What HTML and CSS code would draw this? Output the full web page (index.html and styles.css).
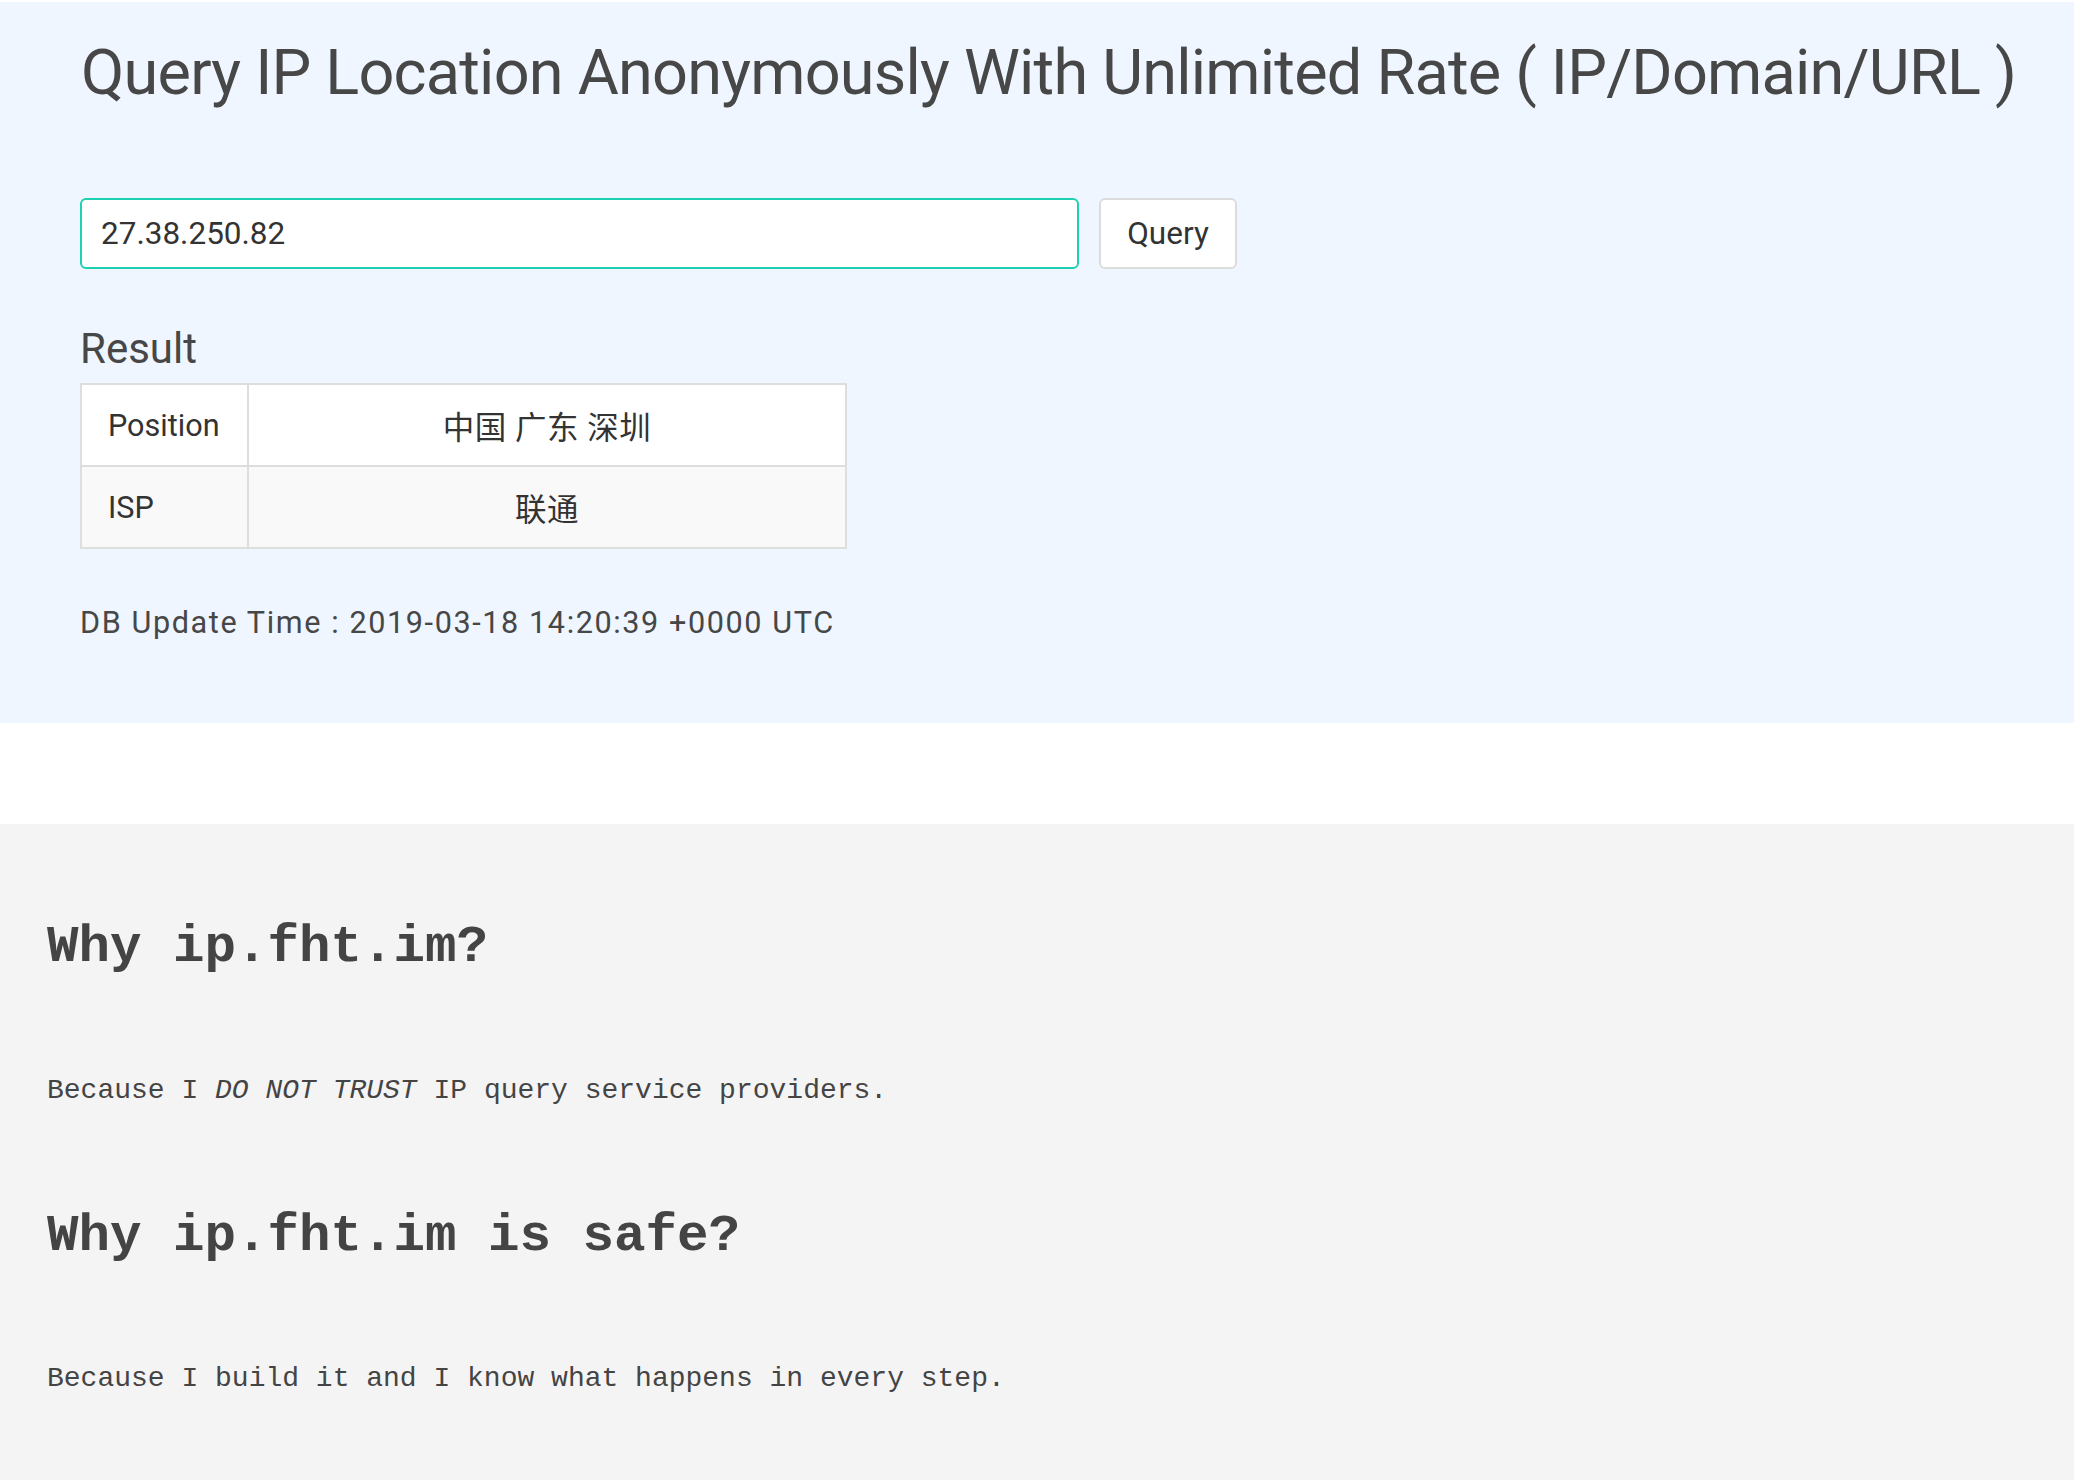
FILE: index.html
```html
<!DOCTYPE html>
<html lang="en">
<head>
<meta charset="utf-8">
<title>Query IP Location Anonymously</title>
<link rel="stylesheet" href="styles.css">
</head>
<body>
<header class="hero">
  <div class="hero-inner">
    <h1 class="title">Query IP Location Anonymously With Unlimited Rate ( IP/Domain/URL )</h1>
    <form class="query-form">
      <input class="query-input" type="text" value="27.38.250.82">
      <button class="query-btn" type="button">Query</button>
    </form>
    <h3 class="result-title">Result</h3>
    <table class="result-table">
      <tr class="row-odd">
        <td class="cell-key">Position</td>
        <td class="cell-val">中国 广东 深圳</td>
      </tr>
      <tr class="row-even">
        <td class="cell-key">ISP</td>
        <td class="cell-val">联通</td>
      </tr>
    </table>
    <p class="db-time">DB Update Time : 2019-03-18 14:20:39 +0000 UTC</p>
  </div>
</header>
<div class="spacer"></div>
<section class="why">
  <h2 class="why-title">Why ip.fht.im?</h2>
  <p class="why-text">Because I <em>DO NOT TRUST</em> IP query service providers.</p>
  <h2 class="why-title">Why ip.fht.im is safe?</h2>
  <p class="why-text">Because I build it and I know what happens in every step.</p>
</section>
</body>
</html>
```
FILE: styles.css
```css
html, body {
  margin: 0;
  padding: 0;
  background: #ffffff;
}
body {
  padding-top: 2px;
  font-family: Roboto, "Noto Sans CJK SC", sans-serif;
  color: #444;
}
.hero {
  background: #eff6ff;
  padding: 36px 0 79px 80px;
}
.title {
  margin: 0;
  font-size: 63px;
  line-height: 69px;
  font-weight: 400;
  color: #474747;
  margin-left: 1px;
  letter-spacing: -0.78px;
  white-space: nowrap;
}
.query-form {
  display: flex;
  gap: 20px;
  margin-top: 91px;
  height: 71px;
}
.query-input {
  box-sizing: border-box;
  width: 999px;
  height: 71px;
  border: 2px solid #1dd1b2;
  border-radius: 6px;
  background: #fff;
  padding: 0 19px;
  font-family: Roboto, sans-serif;
  font-size: 31.5px;
  color: #333;
  outline: none;
}
.query-btn {
  box-sizing: border-box;
  width: 138px;
  height: 71px;
  border: 2px solid #dcdcdc;
  border-radius: 6px;
  background: #fff;
  font-family: Roboto, sans-serif;
  font-size: 31.5px;
  color: #333;
  padding: 0;
}
.result-title {
  margin: 57px 0 11px;
  font-size: 42px;
  line-height: 46px;
  font-weight: 400;
  color: #474747;
}
.result-table {
  border-collapse: collapse;
  width: 767px;
  font-size: 30.6px;
  color: #333;
}
.result-table td {
  border: 2px solid #dedede;
  height: 82px;
  padding: 0 26px;
  box-sizing: border-box;
}
.row-odd { background: #fff; }
.row-even { background: #f9f9f9; }
.cell-key {
  width: 167px;
  text-align: left;
}
.cell-val {
  text-align: center;
  font-size: 31.5px;
  letter-spacing: 0.5px;
  font-family: Roboto, "Noto Sans CJK SC", sans-serif;
}
.db-time {
  margin: 52.5px 0 0;
  font-size: 30.6px;
  line-height: 42.8px;
  letter-spacing: 1.6px;
  color: #474747;
}
.spacer {
  height: 101px;
  background: #fff;
}
.why {
  background: #f4f4f4;
  padding: 95px 0 80px 47px;
  display: flex;
  flex-direction: column;
  font-family: "Liberation Mono", "Courier New", monospace;
  color: #444;
}
.why-title {
  margin: 0 0 93px;
  font-size: 52.5px;
  line-height: 57.75px;
  font-weight: 700;
}
.why-text {
  margin: 0 0 95.5px;
  font-size: 28px;
  line-height: 42px;
}
.why-text:last-child {
  margin-bottom: 0;
}
.why-text em {
  font-style: italic;
}
```
